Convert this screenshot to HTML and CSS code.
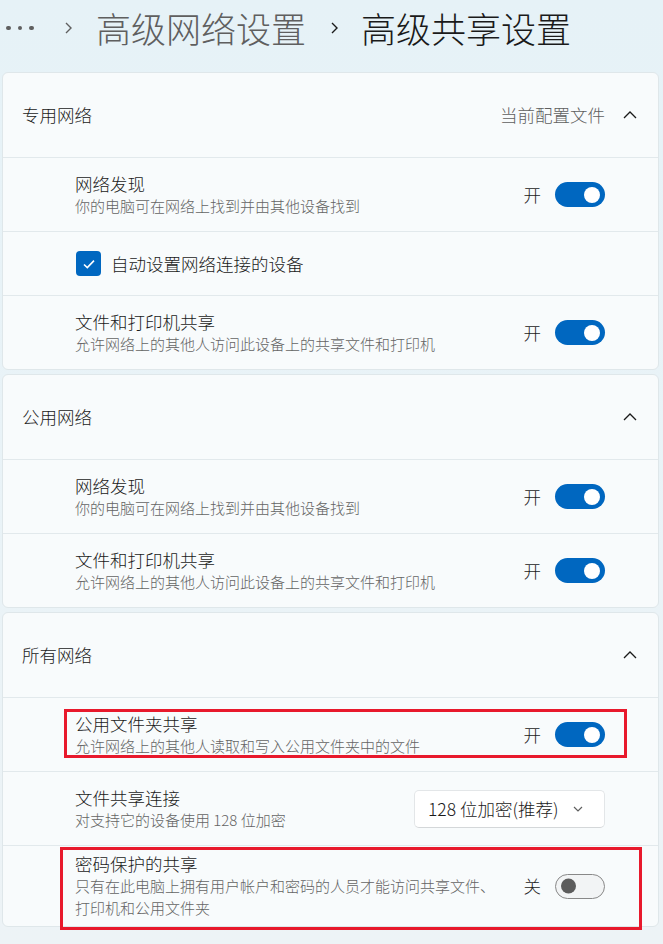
FILE: index.html
```html
<!DOCTYPE html>
<html lang="zh-CN">
<head>
<meta charset="utf-8">
<title>高级共享设置</title>
<link rel="stylesheet" href="styles.css">
</head>
<body>
<div class="page">
  <div class="breadcrumb">
    <span class="dots"><i></i><i></i><i></i></span>
    <svg class="crumb-chev" width="9" height="14" viewBox="0 0 9 14"><path d="M2 2 L7 7 L2 12" fill="none" stroke="#5f5f5f" stroke-width="1.4"/></svg>
    <span class="crumb-parent">高级网络设置</span>
    <svg class="crumb-chev" width="9" height="14" viewBox="0 0 9 14"><path d="M2 2 L7 7 L2 12" fill="none" stroke="#1a1a1a" stroke-width="1.4"/></svg>
    <span class="crumb-current">高级共享设置</span>
  </div>

  <section class="card">
    <div class="card-head">
      <span class="head-title">专用网络</span>
      <span class="head-right">
        <span class="head-note">当前配置文件</span>
        <svg class="up" width="16" height="10" viewBox="0 0 16 10"><path d="M2 8 L8 2 L14 8" fill="none" stroke="#1a1a1a" stroke-width="1.3"/></svg>
      </span>
    </div>
    <div class="row">
      <div class="text"><div class="title">网络发现</div><div class="sub">你的电脑可在网络上找到并由其他设备找到</div></div>
      <div class="ctrl"><span class="state">开</span><span class="toggle on"><i></i></span></div>
    </div>
    <div class="row row-check">
      <span class="checkbox"><svg width="14" height="12" viewBox="0 0 14 12"><path d="M2 6.5 L5.3 9.6 L12 2.6" fill="none" stroke="#fff" stroke-width="1.6"/></svg></span>
      <span class="check-label">自动设置网络连接的设备</span>
    </div>
    <div class="row">
      <div class="text"><div class="title">文件和打印机共享</div><div class="sub">允许网络上的其他人访问此设备上的共享文件和打印机</div></div>
      <div class="ctrl"><span class="state">开</span><span class="toggle on"><i></i></span></div>
    </div>
  </section>

  <section class="card">
    <div class="card-head">
      <span class="head-title">公用网络</span>
      <span class="head-right">
        <svg class="up" width="16" height="10" viewBox="0 0 16 10"><path d="M2 8 L8 2 L14 8" fill="none" stroke="#1a1a1a" stroke-width="1.3"/></svg>
      </span>
    </div>
    <div class="row">
      <div class="text"><div class="title">网络发现</div><div class="sub">你的电脑可在网络上找到并由其他设备找到</div></div>
      <div class="ctrl"><span class="state">开</span><span class="toggle on"><i></i></span></div>
    </div>
    <div class="row">
      <div class="text"><div class="title">文件和打印机共享</div><div class="sub">允许网络上的其他人访问此设备上的共享文件和打印机</div></div>
      <div class="ctrl"><span class="state">开</span><span class="toggle on"><i></i></span></div>
    </div>
  </section>

  <section class="card">
    <div class="card-head">
      <span class="head-title">所有网络</span>
      <span class="head-right">
        <svg class="up" width="16" height="10" viewBox="0 0 16 10"><path d="M2 8 L8 2 L14 8" fill="none" stroke="#1a1a1a" stroke-width="1.3"/></svg>
      </span>
    </div>
    <div class="row">
      <span class="mark mark-1"></span>
      <div class="text"><div class="title">公用文件夹共享</div><div class="sub">允许网络上的其他人读取和写入公用文件夹中的文件</div></div>
      <div class="ctrl"><span class="state">开</span><span class="toggle on"><i></i></span></div>
    </div>
    <div class="row">
      <div class="text"><div class="title">文件共享连接</div><div class="sub">对支持它的设备使用 128 位加密</div></div>
      <div class="ctrl"><span class="select">128 位加密(推荐)<svg width="12" height="8" viewBox="0 0 12 8"><path d="M2 2 L6 6 L10 2" fill="none" stroke="#5f5f5f" stroke-width="1.2"/></svg></span></div>
    </div>
    <div class="row row-tall">
      <span class="mark mark-2"></span>
      <div class="text"><div class="title">密码保护的共享</div><div class="sub sub-wrap">只有在此电脑上拥有用户帐户和密码的人员才能访问共享文件、打印机和公用文件夹</div></div>
      <div class="ctrl"><span class="state">关</span><span class="toggle off"><i></i></span></div>
    </div>
  </section>
</div>
</body>
</html>
```

FILE: styles.css
```css
* { box-sizing: border-box; }
html, body { margin: 0; padding: 0; }
body {
  width: 663px;
  height: 944px;
  overflow: hidden;
  background: linear-gradient(180deg, #e6f2f7 0%, #eaf3f7 60%, #edf3f6 100%);
  font-family: "Noto Sans CJK SC", "Noto Sans", sans-serif;
  font-weight: 300;
  color: #1a1a1a;
}
.page { padding: 0 4px 0 2px; }

.breadcrumb {
  height: 56px;
  display: flex;
  align-items: center;
  margin-bottom: 16px;
  font-size: 35px;
  line-height: 56px;
  white-space: nowrap;
}
.dots { display: flex; gap: 7px; margin-left: 4px; width: 32px; }
.dots i { width: 4.5px; height: 4.5px; border-radius: 50%; background: #5f5f5f; display: block; }
.crumb-chev { margin: 0 23px 0 26px; }
.crumb-parent { color: #5f5f5f; }
.crumb-current { color: #1a1a1a; }
.breadcrumb .crumb-chev:nth-of-type(2) { margin: 0 22px 0 24px; }

.card {
  background: #f8fbfc;
  border: 1px solid #dfe7ea;
  border-radius: 6px;
  margin-bottom: 4px;
}
.card-head {
  height: 84px;
  display: flex;
  align-items: center;
  justify-content: space-between;
  padding: 0 20px 0 19px;
  font-size: 17.5px;
  line-height: 24px;
}
.head-right { display: flex; align-items: center; }
.head-note { color: #5f5f5f; margin-right: 17px; }
.up { display: block; }

.row {
  position: relative;
  min-height: 74px;
  border-top: 1px solid #e2e9ec;
  display: flex;
  align-items: center;
  justify-content: space-between;
  padding: 7px 53px 7px 72px;
}
.row-check { min-height: 64px; justify-content: flex-start; }
.title { font-size: 17.5px; line-height: 22px; color: #1a1a1a; }
.sub { font-size: 15px; line-height: 22px; color: #646464; }
.sub-wrap { width: 420px; }
.ctrl { display: flex; align-items: center; }
.state { font-size: 17.5px; line-height: 24px; margin-right: 14px; }

.toggle {
  width: 50px;
  height: 25px;
  border-radius: 13px;
  position: relative;
  display: block;
}
.toggle i { position: absolute; top: 50%; width: 16px; height: 16px; border-radius: 50%; transform: translateY(-50%); }
.toggle.on { background: #0067c0; }
.toggle.on i { right: 5px; background: #fff; }
.toggle.off { background: #f2f4f5; border: 1.5px solid #888; }
.toggle.off i { left: 5px; width: 15px; height: 15px; background: #5c5c5c; }

.checkbox {
  width: 25px;
  height: 25px;
  border-radius: 4px;
  background: #0067c0;
  display: flex;
  align-items: center;
  justify-content: center;
  margin: 0 10px 0 1px;
}
.check-label { font-size: 17.5px; line-height: 24px; }

.select {
  width: 191px;
  height: 38px;
  background: #fff;
  border: 1px solid #e3e6e8;
  border-bottom-color: #d4d7d9;
  border-radius: 5px;
  display: flex;
  align-items: center;
  justify-content: space-between;
  padding: 0 20px 0 13px;
  font-size: 17.5px;
  color: #1a1a1a;
}

.mark {
  position: absolute;
  border: 3px solid #e8192c;
  pointer-events: none;
}
.mark-1 { left: 61px; top: 11px; width: 563px; height: 49px; }
.mark-2 { left: 57px; top: 1px; width: 582px; height: 83px; }
```
